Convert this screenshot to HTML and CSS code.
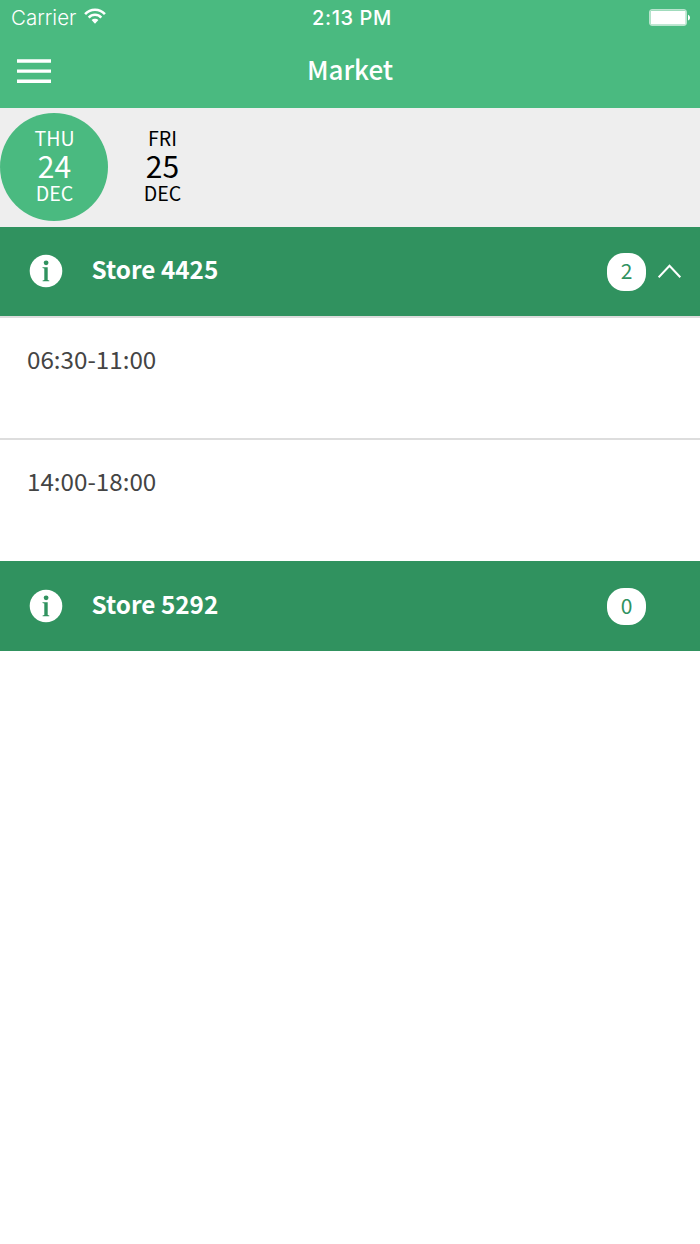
FILE: index.html
```html
<!DOCTYPE html>
<html lang="en">
<head>
<meta charset="utf-8">
<title>Market</title>
<link rel="stylesheet" href="styles.css">
</head>
<body>
<header class="header">
  <div class="status">
    <div class="carrier"><span class="carrier-name">Carrier</span>
      <svg class="wifi" width="22" height="18" viewBox="0 0 22 18"><g fill="none" stroke="#fff" stroke-width="2.5"><path d="M1.1 7.2C6.5 1.2 15.5 1.2 20.9 7.2"/><path d="M4.7 10.6C8.2 6.9 13.8 6.9 17.3 10.6"/></g><path d="M7.6 13.1C9.4 11.2 12.6 11.2 14.4 13.1L11 16.7Z" fill="#fff"/></svg>
    </div>
    <div class="clock">2:13 PM</div>
    <svg class="battery" width="42" height="18" viewBox="0 0 42 18"><rect x=".5" y=".5" width="37" height="16" rx="2.5" fill="#fff" fill-opacity=".3" stroke="#fff" stroke-opacity=".55"/><rect x="1.6" y="1.7" width="35" height="13.7" rx="1" fill="#fff"/><path d="M39 5.7C41.7 6.5 41.7 10.7 39 11.5Z" fill="#fff"/></svg>
  </div>
  <nav class="navbar">
    <svg class="menu" width="34" height="26" viewBox="0 0 34 26"><path d="M0 2H34M0 12.1H34M0 22.3H34" stroke="#fff" stroke-width="3.4"/></svg>
    <h1 class="title">Market</h1>
  </nav>
</header>
<section class="days">
  <div class="day day-active"><span>THU</span><span class="date">24</span><span>DEC</span></div>
  <div class="day"><span>FRI</span><span class="date">25</span><span>DEC</span></div>
</section>
<main>
  <div class="store store-first">
    <svg class="info" width="34" height="34" viewBox="0 0 34 34"><circle cx="17" cy="17" r="16.3" fill="#fff"/><circle cx="17.1" cy="8.8" r="2.4" fill="#30925f"/><path d="M13.5 13.2H18.7V26L20.3 26.5V27.2H13.6V26.5L15.3 26V14.6L13.5 14.1Z" fill="#30925f"/></svg>
    <h2 class="store-name">Store 4425</h2>
    <span class="badge">2</span>
    <svg class="chevron" width="24" height="16" viewBox="0 0 24 16"><path d="M.7 14.3L11.5 2.7L22.3 14.3" fill="none" stroke="#fff" stroke-width="2"/></svg>
  </div>
  <div class="slot">06:30-11:00</div>
  <div class="slot slot-last">14:00-18:00</div>
  <div class="store store-second">
    <svg class="info" width="34" height="34" viewBox="0 0 34 34"><circle cx="17" cy="17" r="16.3" fill="#fff"/><circle cx="17.1" cy="8.8" r="2.4" fill="#30925f"/><path d="M13.5 13.2H18.7V26L20.3 26.5V27.2H13.6V26.5L15.3 26V14.6L13.5 14.1Z" fill="#30925f"/></svg>
    <h2 class="store-name">Store 5292</h2>
    <span class="badge">0</span>
  </div>
</main>
</body>
</html>
```

FILE: styles.css
```css
* { box-sizing: border-box; }
body { margin: 0; background: #fff; font-family: "Noto Sans CJK SC", sans-serif; }
svg { display: block; flex: none; }
.header { height: 108px; background: #4aba80; color: #fff; }
.status { display: grid; grid-template-columns: 1fr auto 1fr; align-items: start; height: 36px; padding: 0 9px 0 11px; font-family: Inter, sans-serif; font-size: 20px; line-height: 24px; }
.carrier { display: flex; gap: 8px; padding-top: 6px; }
.carrier-name { font-weight: 300; font-size: 20.5px; }
.wifi { margin-top: 1px; }
.clock { padding: 6px 0 0 2px; font-weight: 500; letter-spacing: 0.6px; }
.battery { margin-top: 9px; justify-self: end; }
.navbar { display: grid; grid-template-columns: 34px 1fr 34px; height: 72px; padding: 0 17px; }
.menu { margin-top: 23px; }
.title { margin: 15px 0 0; font-size: 26px; font-weight: 500; line-height: 36px; text-align: center; }
.days { display: flex; height: 118.5px; padding-top: 5.3px; background: #eee; }
.day { display: flex; flex-direction: column; align-items: center; width: 108px; height: 108px; padding: 11px 0 0 1px; border-radius: 50%; font-size: 19.6px; line-height: 28px; color: #000; }
.day-active { background: #4aba80; color: #fff; }
.date { font-size: 30px; line-height: 27px; }
.store { display: flex; align-items: center; height: 90px; padding: 0 18px 0 29px; background: #30925f; color: #fff; }
.store-first { height: 89.5px; }
.store-name { flex: 1; margin: 0 0 5px 28.6px; font-size: 24.3px; font-weight: 700; line-height: 36px; }
.badge { width: 39px; height: 37.5px; margin: 1px 12px 0 0; border-radius: 17px; background: #fff; color: #30925f; font-size: 21px; line-height: 35px; text-align: center; }
.store-second .badge { margin-right: 36px; }
.slot { height: 122px; padding: 24px 27px; border-top: 2px solid #ddd; color: #444; font-size: 24.2px; line-height: 34px; }
.slot-last { height: 123px; }
```
